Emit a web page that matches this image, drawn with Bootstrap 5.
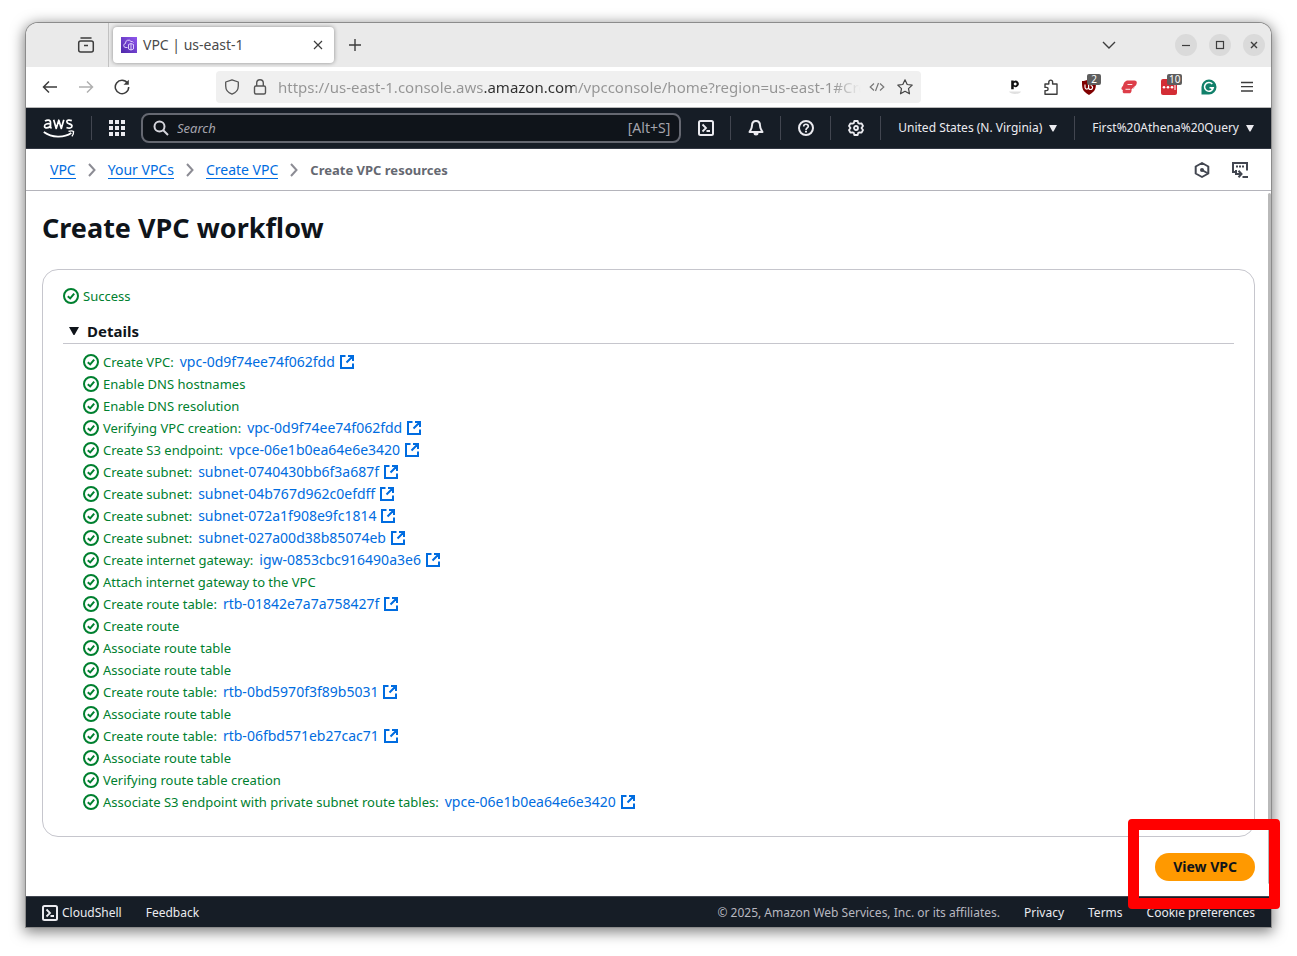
<!DOCTYPE html>
<html lang="en">
<head>
<meta charset="utf-8">
<meta name="viewport" content="width=device-width, initial-scale=1">
<title>VPC | us-east-1</title>
<link href="https://cdn.jsdelivr.net/npm/bootstrap@5.3.0/dist/css/bootstrap.min.css" rel="stylesheet">
<style>
  body { font-family: "Noto Sans", "Open Sans", sans-serif; font-size: 13px; line-height: 22px; color: #0f141a; background: #fff; padding: 23px 26px 29px; }
  svg { display: block; flex: none; }
  button { font: inherit; }
  .bare { background: none; border: 0; padding: 0; color: inherit; display: flex; align-items: center; justify-content: center; }
  .browser { min-height: calc(100vh - 52px); border-radius: 12px 12px 0 0; background: #fff; box-shadow: 0 0 0 1px #8c8c8c, 0 3px 14px 2px rgba(0,0,0,.5); }

  .tabstrip { height: 44px; background: #eaeaea; border-radius: 12px 12px 0 0; color: #3d3d3d; padding-right: 6px; }
  .view-btn { width: 83px; padding-left: 37px; border-right: 1px solid #c2c2c2; align-self: stretch; }
  .tab-card { width: 221px; height: 36px; margin-left: 4px; padding: 0 8px; background: #fff; border-radius: 4px; box-shadow: 0 0 4px rgba(0,0,0,.4); }
  .chrome-text { font-size: 14px; margin-left: 6px; color: #4a4a4a; }
  .plus-btn { width: 42px; height: 36px; }
  .chev-btn { width: 36px; height: 36px; margin-right: 48px; }
  .win-group { gap: 12px; }
  .win-btn { width: 22px; height: 22px; border-radius: 50%; background: #dadada; }

  .toolbar { height: 41px; border-bottom: 1px solid #b9b9b9; padding: 0 6px; color: #3d3d3d; }
  .tool { width: 36px; height: 32px; }
  .ext { width: 40px; height: 32px; position: relative; }
  .count { position: absolute; left: 18px; top: 3px; min-width: 14px; padding: 0 2px; background: #5e5e5e; color: #fff; border-radius: 2px; font-size: 10px; line-height: 11px; text-align: center; }
  .address { margin: 0 76px; height: 32px; background: #f0f0f0; border-radius: 4px; padding: 0 8px; }
  .padlock { margin: 0 6px 0 8px; }
  .address input { border: 0; outline: 0; padding: 0; min-width: 0; font-size: 15px; color: #8f8f8f; height: 32px; -webkit-text-fill-color: transparent;
    background: linear-gradient(90deg, #949494 205px, #303030 205px, #303030 297px, #949494 297px, #949494 555px, #f0f0f0 583px); -webkit-background-clip: text; background-clip: text; }

  .aws-nav { height: 41px; background: #161d26; border-bottom: 1px solid #333843; color: #ebebf0; padding-left: 17px; font-size: 12px; }
  .rule { width: 1px; height: 24px; background: #424650; flex: none; }
  .nav-ico { width: 49px; height: 40px; }
  .nav-menu { padding: 0 17px; gap: 7px; }
  .finder { height: 30px; border: 2px solid #656871; border-radius: 8px; background: #0f141a; padding: 0 9px 0 10px; }
  .finder input { background: none; border: 0; outline: 0; padding: 0; min-width: 0; color: #fff; font-size: 13px; }
  .finder input::placeholder { font-style: italic; color: #a4a4ad; opacity: 1; }
  .finder label { color: #a4a4ad; font-size: 14px; }

  .crumbs { height: 42px; border-bottom: 1px solid #b4b4bb; padding: 0 22px 0 24px; font-size: 14px; }
  .crumbs ol, .crumbs li { gap: 8px; }
  .crumbs li { display: flex; align-items: center; }
  .crumbs li a { color: #006ce0; text-decoration: none; border-bottom: 1px solid #006ce0; line-height: 17px; }
  .crumbs .here { color: #656871; font-weight: 700; font-size: 13px; }
  .crumbs button { color: #424650; }
  .crumb-tools { gap: 21px; }

  main { position: relative; padding: 20px 16px 15px; }
  main::after { content: ""; position: absolute; right: 0; top: 2px; bottom: 12px; width: 3px; border-radius: 2px; background: #b9b9b9; }
  h1 { font-size: 27px; line-height: 34px; font-weight: 700; margin: 0 0 24px; }
  .panel { border: 1px solid #c6c6cd; border-radius: 16px; padding: 15px 20px 23px; margin-bottom: 16px; }
  .ok { color: #00802f; display: flex; align-items: center; gap: 4px; }
  .ok a { color: #006ce0; text-decoration: none; display: flex; align-items: center; gap: 4px; font-size: 14px; margin-left: 2px; }
  .details-head { margin-top: 12px; border-bottom: 1px solid #c6c6cd; padding: 0 0 1px 6px; height: 25px; }
  .details-head button { font-size: 15px; font-weight: 700; line-height: 24px; gap: 8px; }
  .steps { margin: 7px 0 0; padding-left: 20px; list-style: none; }
  .mark-wrap { position: relative; }
  .mark-wrap::after { content: ""; position: absolute; inset: -34px -25px -28px -27px; border: 11px solid #f00; border-radius: 4px; z-index: 5; pointer-events: none; }
  .go { background: #ff9900; color: #0f141a; border: 0; border-radius: 14px; height: 28px; padding: 0 18px; font-size: 14px; font-weight: 700; line-height: 28px; }

  footer { height: 31px; background: #161d26; border-top: 1px solid #424650; padding: 1px 16px 0; font-size: 12px; color: #b8b8c0; }
  footer a, footer .bare { color: #ebebf0; text-decoration: none; }
  .foot-links { gap: 24px; }
</style>
</head>
<body>
<svg width="0" height="0" class="position-absolute" aria-hidden="true">
  <symbol id="check" viewBox="0 0 16 16"><circle cx="8" cy="8" r="7" fill="none" stroke="currentColor" stroke-width="2"/><path d="M4.800 8.200 7.200 10.400 11.200 5.600" fill="none" stroke="currentColor" stroke-width="2"/></symbol>
  <symbol id="ext" viewBox="0 0 16 16"><path d="M6.500 2H2v12h12V9.500M9 2h5v5M14 2 7.500 8.500" fill="none" stroke="currentColor" stroke-width="2"/></symbol>
  <symbol id="sep" viewBox="0 0 16 16"><path d="m5 2 5.500 6L5 14" fill="none" stroke="#8c8c94" stroke-width="2"/></symbol>
  <symbol id="shell" viewBox="0 0 16 16"><rect x="1" y="1" width="14" height="14" rx="1.500" fill="none" stroke="currentColor" stroke-width="2"/><path d="m4.500 4.500 3.500 3.500-3.500 3.500M8.500 11H12" fill="none" stroke="currentColor" stroke-width="1.800"/></symbol>
  <symbol id="caret" viewBox="0 0 8 7"><path d="M0 0h8L4.500 6.500h-1z" fill="currentColor"/></symbol>
</svg>

<div class="browser d-flex flex-column">
  <div class="tabstrip d-flex align-items-center">
    <button class="bare view-btn" aria-label="Recent browsing"><svg width="18" height="18" viewBox="0 0 18 18" fill="none" stroke="currentColor" stroke-width="1.500"><path d="M4 2h10" stroke-linecap="round"/><rect x="1.700" y="5" width="14.600" height="11" rx="2"/><path d="M7 9.500h4"/></svg></button>
    <div class="tab-card d-flex align-items-center">
      <svg width="16" height="16" viewBox="0 0 16 16"><defs><linearGradient id="pu" x1="0" y1="1" x2="1" y2="0"><stop stop-color="#4d27a8"/><stop offset="1" stop-color="#9057ee"/></linearGradient></defs><rect width="16" height="16" fill="url(#pu)"/><path d="M6.500 10.500H5a2 2 0 0 1-.5-4A3 3 0 0 1 10 4.500a2 2 0 0 1 2.400 1M7.500 7.500l2.500-1 2.500 1V12L10 13l-2.500-1zM10 7v6" fill="none" stroke="#e9dcff" stroke-width=".9"/></svg>
      <span class="chrome-text flex-grow-1">VPC | us-east-1</span>
      <button class="bare" aria-label="Close tab"><svg width="16" height="16" viewBox="0 0 16 16" stroke="currentColor" stroke-width="1.200"><path d="m4 4 8 8M12 4l-8 8"/></svg></button>
    </div>
    <button class="bare plus-btn" aria-label="New tab"><svg width="16" height="16" viewBox="0 0 16 16" stroke="currentColor" stroke-width="1.400"><path d="M8 2v12M2 8h12"/></svg></button>
    <button class="bare chev-btn ms-auto" aria-label="List all tabs"><svg width="16" height="16" viewBox="0 0 16 16" fill="none" stroke="currentColor" stroke-width="1.400"><path d="m2 5 6 6 6-6"/></svg></button>
    <div class="win-group d-flex">
      <button class="bare win-btn" aria-label="Minimize"><svg width="10" height="10" viewBox="0 0 10 10" stroke="currentColor" stroke-width="1.200"><path d="M1 5.500h8"/></svg></button>
      <button class="bare win-btn" aria-label="Maximize"><svg width="10" height="10" viewBox="0 0 10 10" fill="none" stroke="currentColor" stroke-width="1.200"><rect x="1.500" y="1.500" width="7" height="7"/></svg></button>
      <button class="bare win-btn" aria-label="Close"><svg width="10" height="10" viewBox="0 0 10 10" stroke="currentColor" stroke-width="1.400"><path d="m2 2 6 6M8 2 2 8"/></svg></button>
    </div>
  </div>

  <div class="toolbar d-flex align-items-center">
    <button class="bare tool" aria-label="Back"><svg width="16" height="16" viewBox="0 0 16 16" fill="none" stroke="currentColor" stroke-width="1.500"><path d="M15 8H1.500M7 2.500 1.500 8 7 13.500"/></svg></button>
    <button class="bare tool" aria-label="Forward"><svg width="16" height="16" viewBox="0 0 16 16" fill="none" stroke="#b0b0b0" stroke-width="1.500"><path d="M1 8h13.500M9 2.500 14.500 8 9 13.500"/></svg></button>
    <button class="bare tool" aria-label="Reload"><svg width="16" height="16" viewBox="0 0 16 16" fill="none" stroke="currentColor" stroke-width="1.500"><path d="M13.500 4.200A6.700 6.700 0 1 0 14.700 8"/><path d="M9.500 5.800h5.300V.8z" fill="currentColor" stroke="none"/></svg></button>
    <div class="address d-flex align-items-center flex-grow-1">
      <svg width="16" height="16" viewBox="0 0 16 16" fill="none" stroke="#555" stroke-width="1.300"><path d="M8 .8 14.300 3v4c0 4-2.500 6.800-6.300 8.200C4.200 13.800 1.700 11 1.700 7V3z" stroke-linejoin="round"/></svg>
      <svg class="padlock" width="24" height="16" viewBox="0 0 24 16" fill="none" stroke="#555" stroke-width="1.400"><rect x="6.500" y="7" width="11" height="8" rx="1.500"/><path d="M8.700 7V4a3.300 3.300 0 0 1 6.600 0v3"/></svg>
      <input class="flex-grow-1" type="text" aria-label="Address" value="https://us-east-1.console.aws.amazon.com/vpcconsole/home?region=us-east-1#Crea">
      <button class="bare ms-2" aria-label="View source"><svg width="16" height="16" viewBox="0 0 16 16" fill="none" stroke="#777" stroke-width="1.200"><path d="M5 4.500 1.200 8 5 11.500M11 4.500 14.800 8 11 11.500M9.500 4l-3 8"/></svg></button>
      <button class="bare ms-2 ps-1" aria-label="Bookmark"><svg width="16" height="16" viewBox="0 0 16 16" fill="none" stroke="#444" stroke-width="1.200" stroke-linejoin="round"><path d="m8 .8 2.200 4.700 5 .6-3.700 3.500 1 5.200L8 12.300l-4.500 2.500 1-5.200L.8 6.100l5-.6z"/></svg></button>
    </div>
    <button class="bare tool" aria-label="Pocket"><svg width="16" height="20" viewBox="0 0 16 20"><path d="M2 14.500h12c-1 3.300-11 3.300-12 0z" fill="#e0e0e0"/><path d="M4.200 3.500h2.500v.8a3.200 3.200 0 1 1 0 5.200v2.700h-2.500zM8.200 5.400a1.400 1.500 0 1 0 .01 0z" fill="#111" fill-rule="evenodd"/></svg></button>
    <button class="bare tool" aria-label="Extensions"><svg width="16" height="16" viewBox="0 0 16 16" fill="none" stroke="currentColor" stroke-width="1.400" stroke-linejoin="round"><path d="M2 5h3.800V3a1.900 1.900 0 0 1 3.800 0v2H14v10.200H2v-3.600h1.500a1.600 1.600 0 0 0 0-3.200H2z"/></svg></button>
    <button class="bare ext" aria-label="uBlock"><svg width="16" height="16" viewBox="0 0 16 16"><path d="M8 0c2.500 1.500 4.500 2 7 2 0 7 0 10-7 14C1 12 1 9 1 2c2.500 0 4.500-.5 7-2z" fill="#800000"/><path d="M4 5.500v2.800a1.800 1.800 0 0 0 3.600 0V7.500M7.600 5v3.300a2 2 0 1 0 2-1.800" fill="none" stroke="#fff" stroke-width="1.200"/></svg><span class="count">2</span></button>
    <button class="bare ext" aria-label="ExpressVPN"><svg width="16" height="16" viewBox="0 0 16 16"><path d="M7 1.500h6.500a2.300 2.300 0 0 1 2.200 2.800c-.2 1.500-1 2.500-1.900 3.200-.5 2-1.800 2.500-3.300 2.600.4 2.300-.5 4.200-2.500 4.200H3.600c-2 0-2.200-1.600-1.700-3.200C-.3 10.600.2 8.500 2 6.700 2.800 4 4 1.500 7 1.500z" fill="#dd3e49"/><path d="M6.500 5.500h4.800M4.500 10.300h4.700" stroke="#fff" stroke-width=".9" fill="none"/><path d="m1 6.800 1-.6M11 10.100l3-2.400" stroke="#fff" stroke-width=".8"/></svg></button>
    <button class="bare ext" aria-label="LastPass"><svg width="16" height="16" viewBox="0 0 16 16"><rect width="16" height="16" rx="2" fill="#d32d35"/><g fill="#fff"><circle cx="3" cy="8.300" r="1.300"/><circle cx="7" cy="8.300" r="1.300"/><circle cx="11" cy="8.300" r="1.300"/><path d="M13.500 5.500h1v5.500h-1z"/></g></svg><span class="count">10</span></button>
    <button class="bare ext" aria-label="Grammarly"><svg width="16" height="16" viewBox="0 0 16 16"><path d="M8 .5A7.500 7.500 0 1 1 8 15.500H.5V8A7.500 7.500 0 0 1 8 .5z" fill="#11806a"/><path d="M11.300 5A4.400 4.400 0 1 0 12.300 8.700H8.500M10.200 10.500l2-2" fill="none" stroke="#fff" stroke-width="1.500"/></svg></button>
    <button class="bare tool" aria-label="Menu"><svg width="16" height="16" viewBox="0 0 16 16" stroke="currentColor" stroke-width="1.300"><path d="M2 3.500h12M2 7.700h12M2 12h12"/></svg></button>
  </div>

  <nav class="aws-nav d-flex align-items-center" aria-label="Console">
    <a href="#" class="text-white" aria-label="AWS home"><svg width="32" height="21" viewBox="0 0 32 21" fill="none" stroke="currentColor"><g stroke-width="1.700" stroke-linejoin="round"><path d="M2 3.200C4 1.600 7.500 1.500 7.500 4.500v4.300l.8 1.700M7.500 6C4.500 5.200 1.500 5.900 1.500 8.200s4.200 2.500 6-.4"/><path d="m10.700 1.800 2.500 8.700 2.600-8.300 2.500 8.300 2.500-8.700"/><path d="M28.800 2.600c-2.500-1-5-.6-5 1.200 0 2.600 5.200 1.500 5.200 4.200 0 2.200-3 2.600-5.500 1.400"/></g><path d="M.8 14c8 5.800 20 6.200 27.500 1" stroke-width="1.800"/><path d="M25.500 13.400c2-.7 4-.7 5 .1.300 1.600-.5 3.500-1.600 4.900" stroke-width="1.400"/></svg></a>
    <span class="rule ms-3"></span>
    <button class="bare nav-ico" aria-label="Services"><svg width="16" height="16" viewBox="0 0 16 16" fill="currentColor"><path d="M0 0h4v4H0zM6 0h4v4H6zM12 0h4v4h-4zM0 6h4v4H0zM6 6h4v4H6zM12 6h4v4h-4zM0 12h4v4H0zM6 12h4v4H6zM12 12h4v4h-4z"/></svg></button>
    <div class="finder d-flex align-items-center flex-grow-1">
      <svg width="16" height="16" viewBox="0 0 16 16" fill="none" stroke="#d5d5dc" stroke-width="2"><circle cx="6.500" cy="6.500" r="5"/><path d="m10 10 5 5"/></svg>
      <input id="q" class="flex-grow-1 ms-2" type="text" placeholder="Search"><label for="q">[Alt+S]</label>
    </div>
    <button class="bare nav-ico" aria-label="CloudShell"><svg width="16" height="16"><use href="#shell"/></svg></button>
    <span class="rule"></span>
    <button class="bare nav-ico" aria-label="Notifications"><svg width="16" height="16" viewBox="0 0 16 16" fill="none" stroke="currentColor" stroke-width="2" stroke-linejoin="round"><path d="M8 1C5 1 4 3 4 5.500 4 8.500 3 9.500 1.500 12h13C13 9.500 12 8.500 12 5.500 12 3 11 1 8 1z"/><path d="M5.500 13h5a2.500 2.500 0 0 1-5 0z" fill="currentColor" stroke="none"/></svg></button>
    <span class="rule"></span>
    <button class="bare nav-ico" aria-label="Help"><svg width="16" height="16" viewBox="0 0 16 16" fill="none" stroke="currentColor" stroke-width="2"><circle cx="8" cy="8" r="7"/><path d="M5.700 6.500c0-3 4.600-2.900 4.600-.3C10.300 8 8 7.900 8 10" stroke-width="1.700"/><path d="M7 10.800h2v1.800H7z" fill="currentColor" stroke="none"/></svg></button>
    <span class="rule"></span>
    <button class="bare nav-ico" aria-label="Settings"><svg width="16" height="16" viewBox="0 0 16 16" fill="none" stroke="currentColor" stroke-width="1.800" stroke-linejoin="round"><path d="M6.300 1h3.400l.5 2.100 1.400.6 2-.4 1.400 2.700L13.500 8l1.500 2-1.400 2.700-2-.4-1.400.6-.5 2.100H6.300l-.5-2.100-1.400-.6-2 .4L1 10l1.500-2L1 6l1.400-2.700 2 .4 1.400-.6z"/><circle cx="8" cy="8" r="2"/></svg></button>
    <span class="rule"></span>
    <button class="bare nav-menu">United States (N. Virginia) <svg width="8" height="7"><use href="#caret"/></svg></button>
    <span class="rule"></span>
    <button class="bare nav-menu">First%20Athena%20Query <svg width="8" height="7"><use href="#caret"/></svg></button>
  </nav>

  <nav class="crumbs d-flex align-items-center" aria-label="Breadcrumb">
    <ol class="d-flex list-unstyled m-0 flex-grow-1">
      <li><a href="#">VPC</a><svg width="16" height="16"><use href="#sep"/></svg></li>
      <li><a href="#">Your VPCs</a><svg width="16" height="16"><use href="#sep"/></svg></li>
      <li><a href="#">Create VPC</a><svg width="16" height="16"><use href="#sep"/></svg></li>
      <li class="here" aria-current="page">Create VPC resources</li>
    </ol>
    <div class="crumb-tools d-flex align-items-center">
      <button class="bare" aria-label="Amazon Q"><svg width="16" height="16" viewBox="0 0 16 16" fill="none" stroke="currentColor" stroke-width="2" stroke-linejoin="round"><path d="m8 1 6.300 3.500v7L8 15l-6.300-3.500v-7z"/><path d="m8 8 6 3.500"/><circle cx="8" cy="8" r="2" fill="currentColor" stroke="none"/></svg></button>
      <button class="bare" aria-label="Open tools"><svg width="18" height="18" viewBox="0 0 18 18" fill="none" stroke="currentColor" stroke-width="2"><path d="M4 11H2V2h14v7.500M5 5.500h2M8 5.500h2M11 5.500h2M5 9v4h5M7.500 9.800l3 3.200-3 3.200M11.500 16H17"/></svg></button>
    </div>
  </nav>

  <main class="flex-grow-1">
    <h1>Create VPC workflow</h1>
    <section class="panel">
      <div class="ok"><svg width="16" height="16"><use href="#check"/></svg>Success</div>
      <div class="details-head d-flex align-items-center">
        <button class="bare" data-bs-toggle="collapse" data-bs-target="#steps" aria-expanded="true" aria-controls="steps"><svg width="10" height="8" viewBox="0 0 10 8"><path d="M0 0h10L5.500 8h-1z" fill="currentColor"/></svg>Details</button>
      </div>
      <div class="collapse show" id="steps">
        <ul class="steps">
          <li class="ok"><svg width="16" height="16"><use href="#check"/></svg>Create VPC: <a href="#">vpc-0d9f74ee74f062fdd <svg width="16" height="16"><use href="#ext"/></svg></a></li>
          <li class="ok"><svg width="16" height="16"><use href="#check"/></svg>Enable DNS hostnames</li>
          <li class="ok"><svg width="16" height="16"><use href="#check"/></svg>Enable DNS resolution</li>
          <li class="ok"><svg width="16" height="16"><use href="#check"/></svg>Verifying VPC creation: <a href="#">vpc-0d9f74ee74f062fdd <svg width="16" height="16"><use href="#ext"/></svg></a></li>
          <li class="ok"><svg width="16" height="16"><use href="#check"/></svg>Create S3 endpoint: <a href="#">vpce-06e1b0ea64e6e3420 <svg width="16" height="16"><use href="#ext"/></svg></a></li>
          <li class="ok"><svg width="16" height="16"><use href="#check"/></svg>Create subnet: <a href="#">subnet-0740430bb6f3a687f <svg width="16" height="16"><use href="#ext"/></svg></a></li>
          <li class="ok"><svg width="16" height="16"><use href="#check"/></svg>Create subnet: <a href="#">subnet-04b767d962c0efdff <svg width="16" height="16"><use href="#ext"/></svg></a></li>
          <li class="ok"><svg width="16" height="16"><use href="#check"/></svg>Create subnet: <a href="#">subnet-072a1f908e9fc1814 <svg width="16" height="16"><use href="#ext"/></svg></a></li>
          <li class="ok"><svg width="16" height="16"><use href="#check"/></svg>Create subnet: <a href="#">subnet-027a00d38b85074eb <svg width="16" height="16"><use href="#ext"/></svg></a></li>
          <li class="ok"><svg width="16" height="16"><use href="#check"/></svg>Create internet gateway: <a href="#">igw-0853cbc916490a3e6 <svg width="16" height="16"><use href="#ext"/></svg></a></li>
          <li class="ok"><svg width="16" height="16"><use href="#check"/></svg>Attach internet gateway to the VPC</li>
          <li class="ok"><svg width="16" height="16"><use href="#check"/></svg>Create route table: <a href="#">rtb-01842e7a7a758427f <svg width="16" height="16"><use href="#ext"/></svg></a></li>
          <li class="ok"><svg width="16" height="16"><use href="#check"/></svg>Create route</li>
          <li class="ok"><svg width="16" height="16"><use href="#check"/></svg>Associate route table</li>
          <li class="ok"><svg width="16" height="16"><use href="#check"/></svg>Associate route table</li>
          <li class="ok"><svg width="16" height="16"><use href="#check"/></svg>Create route table: <a href="#">rtb-0bd5970f3f89b5031 <svg width="16" height="16"><use href="#ext"/></svg></a></li>
          <li class="ok"><svg width="16" height="16"><use href="#check"/></svg>Associate route table</li>
          <li class="ok"><svg width="16" height="16"><use href="#check"/></svg>Create route table: <a href="#">rtb-06fbd571eb27cac71 <svg width="16" height="16"><use href="#ext"/></svg></a></li>
          <li class="ok"><svg width="16" height="16"><use href="#check"/></svg>Associate route table</li>
          <li class="ok"><svg width="16" height="16"><use href="#check"/></svg>Verifying route table creation</li>
          <li class="ok"><svg width="16" height="16"><use href="#check"/></svg>Associate S3 endpoint with private subnet route tables: <a href="#">vpce-06e1b0ea64e6e3420 <svg width="16" height="16"><use href="#ext"/></svg></a></li>
        </ul>
      </div>
    </section>
    <div class="d-flex justify-content-end"><div class="mark-wrap"><button class="go d-block">View VPC</button></div></div>
  </main>

  <footer class="d-flex align-items-center">
    <button class="bare gap-1"><svg width="16" height="16"><use href="#shell"/></svg>CloudShell</button>
    <a href="#" class="ms-4">Feedback</a>
    <div class="foot-links d-flex ms-auto">
      <span>© 2025, Amazon Web Services, Inc. or its affiliates.</span>
      <a href="#">Privacy</a>
      <a href="#">Terms</a>
      <a href="#">Cookie preferences</a>
    </div>
  </footer>
</div>
<script src="https://cdn.jsdelivr.net/npm/bootstrap@5.3.0/dist/js/bootstrap.bundle.min.js"></script>
</body>
</html>
